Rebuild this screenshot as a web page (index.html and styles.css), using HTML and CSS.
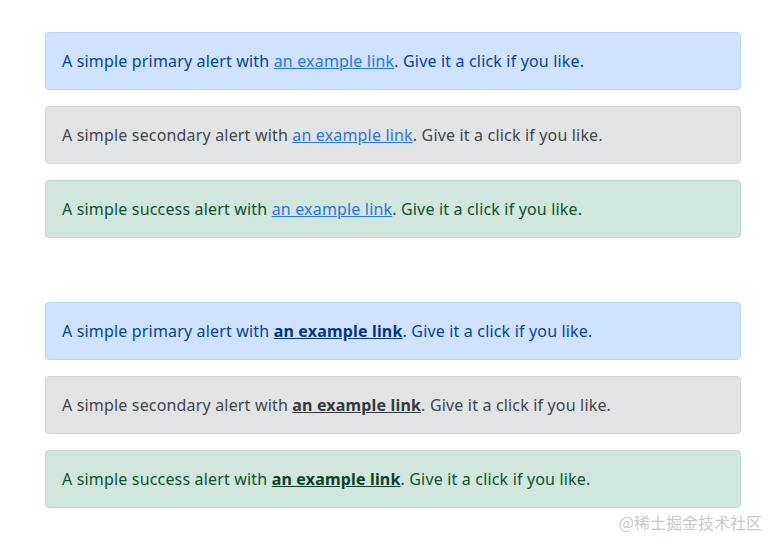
FILE: index.html
```html
<!DOCTYPE html>
<html lang="en">
<head>
<meta charset="utf-8">
<link rel="stylesheet" href="styles.css">
</head>
<body>
<div class="page">
  <div class="group">
    <div class="alert alert-primary">A simple primary alert with <a href="#" class="plain-link">an example link</a>. Give it a click if you like.</div>
    <div class="alert alert-secondary">A simple secondary alert with <a href="#" class="plain-link">an example link</a>. Give it a click if you like.</div>
    <div class="alert alert-success">A simple success alert with <a href="#" class="plain-link">an example link</a>. Give it a click if you like.</div>
  </div>
  <div class="group">
    <div class="alert alert-primary">A simple primary alert with <a href="#" class="alert-link">an example link</a>. Give it a click if you like.</div>
    <div class="alert alert-secondary">A simple secondary alert with <a href="#" class="alert-link">an example link</a>. Give it a click if you like.</div>
    <div class="alert alert-success">A simple success alert with <a href="#" class="alert-link">an example link</a>. Give it a click if you like.</div>
  </div>
</div>
<div class="watermark">@稀土掘金技术社区</div>
</body>
</html>
```
FILE: styles.css
```css
html, body {
  margin: 0;
  padding: 0;
  background: #ffffff;
}
body {
  font-family: "Noto Sans", "Open Sans", "Liberation Sans", sans-serif;
  font-size: 16px;
  line-height: 24px;
  width: 778px;
  height: 548px;
  overflow: hidden;
}
.page {
  padding: 32px 37px 0 45px;
  display: flex;
  flex-direction: column;
  gap: 64px;
}
.group {
  display: flex;
  flex-direction: column;
  gap: 16px;
}
.alert {
  padding: 16px;
  border: 1px solid transparent;
  border-radius: 4px;
  white-space: nowrap;
  letter-spacing: 0.17px;
}
.alert-primary {
  color: #084298;
  background: #cfe2ff;
  border-color: #b6d4fe;
}
.alert-secondary {
  color: #41464b;
  background: #e2e3e5;
  border-color: #d3d6d8;
}
.alert-success {
  color: #0f5132;
  background: #d1e7dd;
  border-color: #badbcc;
}
.plain-link {
  color: #2a76e0;
  text-decoration: underline;
}
.alert-link {
  font-weight: 700;
  text-decoration: underline;
}
.alert-primary .alert-link { color: #06357a; }
.alert-secondary .alert-link { color: #35383c; }
.alert-success .alert-link { color: #0c4128; }
.watermark {
  position: absolute;
  right: 16px;
  top: 510px;
  font-family: "Noto Sans CJK SC", sans-serif;
  font-size: 16px;
  color: #c8c8c8;
}
```
